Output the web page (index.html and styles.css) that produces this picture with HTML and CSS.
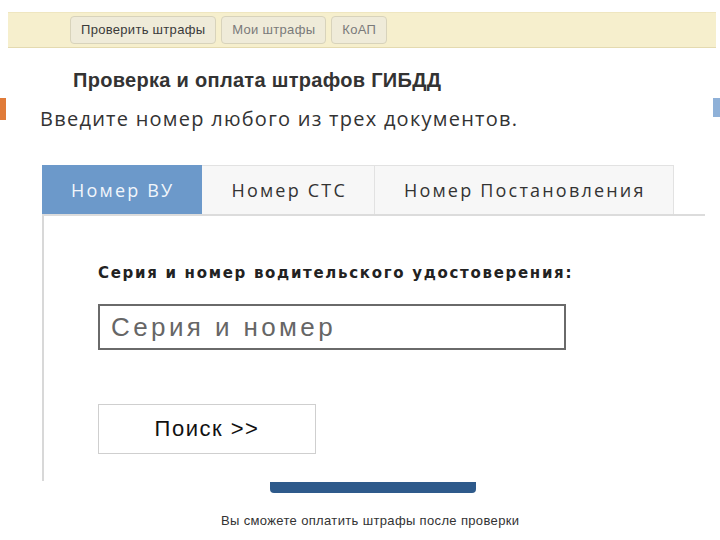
FILE: index.html
```html
<!DOCTYPE html>
<html lang="ru">
<head>
<meta charset="utf-8">
<title>Проверка штрафов</title>
<link rel="stylesheet" href="styles.css">
</head>
<body>
<div class="topbar">
  <span class="navbtn">Проверить штрафы</span>
  <span class="navbtn muted">Мои штрафы</span>
  <span class="navbtn muted">КоАП</span>
</div>
<h1 class="title">Проверка и оплата штрафов ГИБДД</h1>
<div class="intro">
  <span class="mark-left"></span>
  <p class="intro-text">Введите номер любого из трех документов.</p>
  <span class="mark-right"></span>
</div>
<div class="tabs">
  <div class="tab active">Номер ВУ</div>
  <div class="tab">Номер СТС</div>
  <div class="tab">Номер Постановления</div>
</div>
<div class="panel">
  <div class="label">Серия и номер водительского удостоверения:</div>
  <div class="input">Серия и номер</div>
  <div class="search">Поиск &gt;&gt;</div>
</div>
<div class="paybar"></div>
<p class="footnote">Вы сможете оплатить штрафы после проверки</p>
</body>
</html>
```
FILE: styles.css
```css
html, body {
  margin: 0;
  padding: 0;
  background: #ffffff;
  font-family: "Liberation Sans", Arial, sans-serif;
  color: #333;
}
.topbar {
  margin: 12px 4px 0 8px;
  height: 34px;
  background: #f6efcd;
  border-top: 1px solid #efe6c0;
  border-bottom: 1px solid #e4dab0;
  display: flex;
  align-items: center;
  gap: 5px;
  padding-left: 62px;
}
.navbtn {
  box-sizing: border-box;
  height: 28px;
  line-height: 26px;
  padding: 0 10px;
  border: 1px solid #d8d3bb;
  border-radius: 4px;
  background: #efebd9;
  font-size: 13px;
  letter-spacing: 0.3px;
  color: #3a3a3a;
}
.navbtn.muted {
  color: #7a7a7a;
}
.title {
  margin: 21px 0 0 73px;
  font-size: 20px;
  line-height: 22px;
  font-weight: bold;
  letter-spacing: 0.3px;
  color: #333;
}
.intro {
  display: flex;
  align-items: flex-start;
  margin-top: 7px;
}
.mark-left {
  width: 6px;
  height: 22px;
  background: #e07b39;
  flex: none;
}
.mark-right {
  width: 7px;
  height: 19px;
  background: #8fb1d8;
  flex: none;
}
.intro-text {
  flex: 1;
  margin: 8px 0 0 34px;
  font-family: "Open Sans", sans-serif;
  font-size: 20px;
  line-height: 26px;
  letter-spacing: 1.25px;
  color: #333;
}
.tabs {
  display: flex;
  margin: 33px 15px 0 42px;
  border-bottom: 2px solid #dcdcdc;
}
.tab {
  box-sizing: border-box;
  height: 49px;
  line-height: 49px;
  padding: 0 27px 0 29px;
  background: #f7f7f7;
  border-top: 1px solid #e2e2e2;
  border-right: 1px solid #e2e2e2;
  font-family: "Open Sans", sans-serif;
  font-size: 18px;
  letter-spacing: 2.2px;
  color: #333;
}
.tab.active {
  background: #6c99ca;
  border-color: #6c99ca;
  color: #f2f6fb;
}
.panel {
  margin-left: 42px;
  height: 265px;
  box-sizing: border-box;
  border-left: 2px solid #d8d8d8;
  padding: 48px 0 0 54px;
}
.label {
  font-family: "DejaVu Sans", sans-serif;
  font-weight: bold;
  font-size: 15px;
  line-height: 18px;
  letter-spacing: 1.7px;
  color: #222;
}
.input {
  box-sizing: border-box;
  margin-top: 22px;
  width: 468px;
  height: 46px;
  border: 2px solid #6a6a6a;
  padding-left: 11px;
  font-size: 26px;
  line-height: 42px;
  color: #666;
  letter-spacing: 3.4px;
}
.search {
  box-sizing: border-box;
  margin-top: 54px;
  width: 218px;
  height: 50px;
  border: 1px solid #cfcfcf;
  text-align: center;
  font-size: 22px;
  line-height: 48px;
  color: #111;
  letter-spacing: 1.5px;
}
.paybar {
  margin: 1px 0 0 270px;
  width: 206px;
  height: 11px;
  background: #2e5a8b;
  border-radius: 0 0 4px 4px;
}
.footnote {
  margin: 20px 0 0 221px;
  font-size: 13px;
  letter-spacing: 0.35px;
  color: #333;
}
```
